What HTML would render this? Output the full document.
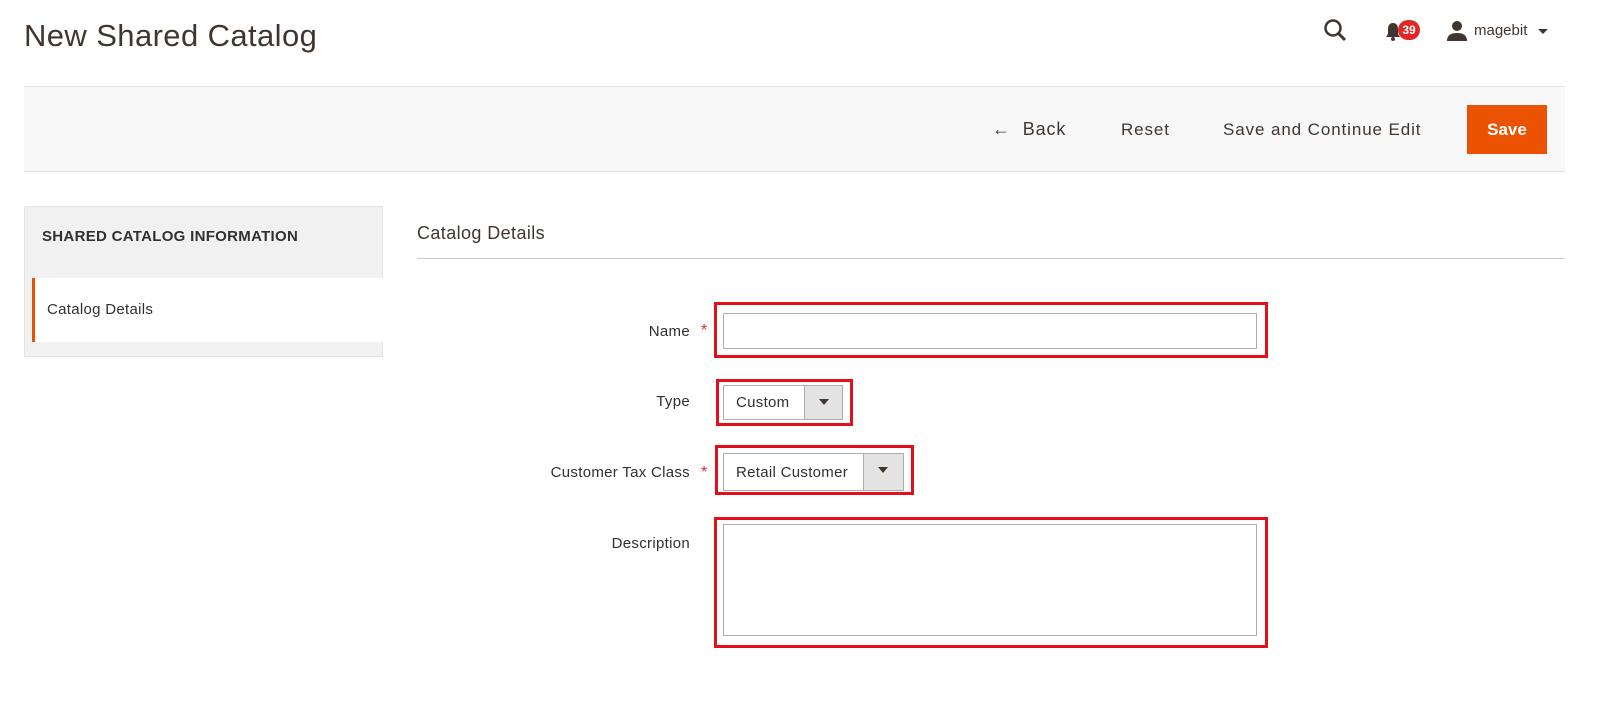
<!DOCTYPE html>
<html><head><style>
*{box-sizing:border-box;margin:0;padding:0}
body{width:1600px;height:726px;background:#fff;font-family:"Liberation Sans",sans-serif;color:#303030;position:relative;overflow:hidden}
.a{position:absolute}
.lbl{font-size:15px;color:#303030;text-align:right;width:280px;left:410px;letter-spacing:0.3px}
.star{color:#e22626;font-size:16px}
.red{border:3px solid #e3101a}
.inp{border:1px solid #adadad;background:#fff}
.sel{border:1px solid #adadad;background:#fff;font-size:15px;color:#303030;letter-spacing:0.3px}
.sel .arr{position:absolute;right:0;top:0;bottom:0;width:38px;background:#e3e3e3;border-left:1px solid #adadad}
.sel .arr:after{content:"";position:absolute;left:14px;top:13px;border:5px solid transparent;border-top:6px solid #41362f}
.btn{font-size:17px;color:#41362f;letter-spacing:0.9px}
</style></head><body>
<div class="a" style="left:24px;top:18px;font-size:31px;color:#41362f;letter-spacing:0.4px">New Shared Catalog</div>
<svg class="a" style="left:1323px;top:18px" width="26" height="26" viewBox="0 0 26 26"><circle cx="10" cy="10" r="7.5" fill="none" stroke="#41362f" stroke-width="2.5"/><line x1="15.5" y1="15.5" x2="22" y2="22" stroke="#41362f" stroke-width="3"/></svg>
<svg class="a" style="left:1385px;top:22px" width="16" height="20" viewBox="0 0 16 20"><path d="M8 1c-3 0-5 2-5 6v5l-2 3h14l-2-3V7c0-4-2-6-5-6z" fill="#41362f"/><circle cx="8" cy="17" r="2" fill="#41362f"/></svg>
<div class="a" style="left:1398px;top:20px;width:22px;height:20px;border-radius:10px;background:#e22626;color:#fff;font-size:12px;font-weight:bold;text-align:center;line-height:20px">39</div>
<svg class="a" style="left:1446px;top:20px" width="22" height="22" viewBox="0 0 22 22"><circle cx="11" cy="6" r="5" fill="#41362f"/><path d="M1 21c0-6 4-8 10-8s10 2 10 8z" fill="#41362f"/></svg>
<div class="a" style="left:1474px;top:22px;font-size:15px;color:#41362f">magebit</div>
<div class="a" style="left:1538px;top:29px;border:5px solid transparent;border-top:5px solid #41362f"></div>
<div class="a" style="left:24px;top:86px;width:1541px;height:86px;background:#f8f8f8;border-top:1px solid #e3e3e3;border-bottom:1px solid #e3e3e3"></div>
<div class="a btn" style="left:992px;top:119px;font-size:18px">←&nbsp; Back</div>
<div class="a btn" style="left:1121px;top:120px">Reset</div>
<div class="a btn" style="left:1223px;top:120px">Save and Continue Edit</div>
<div class="a" style="left:1467px;top:105px;width:80px;height:49px;background:#eb5202;color:#fff;font-size:17px;font-weight:bold;text-align:center;line-height:49px">Save</div>
<div class="a" style="left:24px;top:206px;width:359px;height:151px;background:#f1f1f1;border:1px solid #e3e3e3"></div>
<div class="a" style="left:42px;top:228px;font-size:15px;font-weight:bold;color:#303030;letter-spacing:0.3px">SHARED CATALOG INFORMATION</div>
<div class="a" style="left:32px;top:278px;width:351px;height:64px;background:#fff;border-left:3px solid #eb5202"></div>
<div class="a" style="left:47px;top:301px;font-size:15px;letter-spacing:0.3px">Catalog Details</div>
<div class="a" style="left:417px;top:223px;font-size:18px;color:#41362f;letter-spacing:0.4px">Catalog Details</div>
<div class="a" style="left:417px;top:258px;width:1148px;height:1px;background:#ccc"></div>
<div class="a lbl" style="top:323px">Name</div><div class="a star" style="left:701px;top:322px">*</div>
<div class="a red" style="left:714px;top:302px;width:554px;height:56px"></div>
<div class="a inp" style="left:723px;top:313px;width:534px;height:36px"></div>
<div class="a lbl" style="top:393px">Type</div>
<div class="a red" style="left:716px;top:379px;width:137px;height:47px"></div>
<div class="a sel" style="left:723px;top:385px;width:120px;height:35px"><span class="a" style="left:12px;top:8px">Custom</span><div class="arr"></div></div>
<div class="a lbl" style="top:464px">Customer Tax Class</div><div class="a star" style="left:701px;top:464px">*</div>
<div class="a red" style="left:715px;top:445px;width:199px;height:50px"></div>
<div class="a sel" style="left:723px;top:453px;width:181px;height:38px"><span class="a" style="left:12px;top:10px">Retail Customer</span><div class="arr" style="width:40px"></div></div>
<div class="a lbl" style="top:535px">Description</div>
<div class="a red" style="left:714px;top:517px;width:554px;height:131px"></div>
<div class="a inp" style="left:723px;top:524px;width:534px;height:112px"></div>
</body></html>
